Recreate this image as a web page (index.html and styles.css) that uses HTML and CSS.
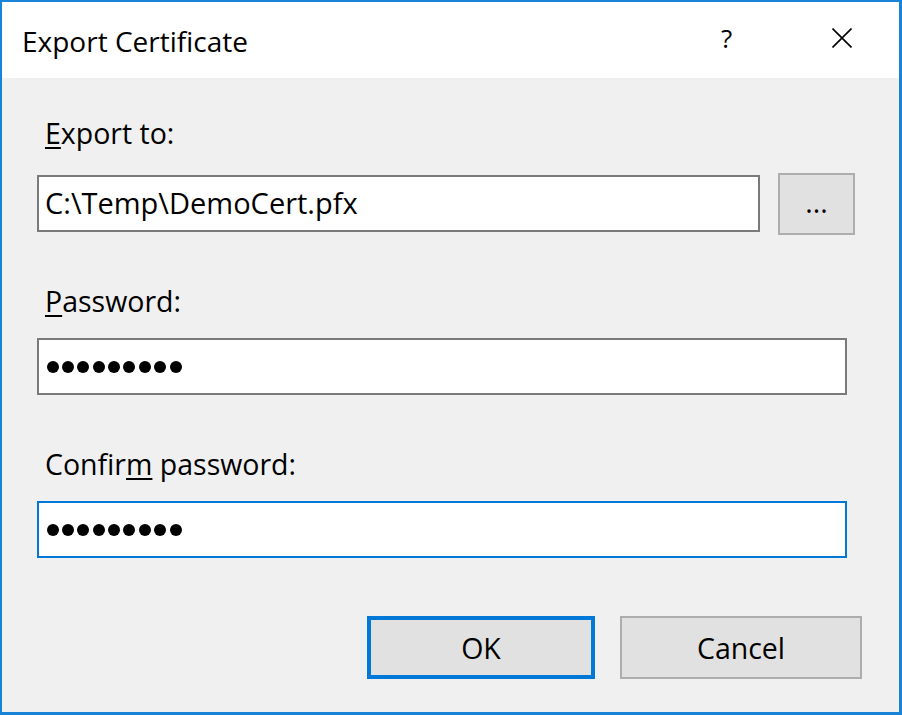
FILE: index.html
```html
<!DOCTYPE html>
<html lang="en">
<head>
<meta charset="utf-8">
<title>Export Certificate</title>
<link rel="stylesheet" href="styles.css">
</head>
<body>
<div class="window">
  <div class="titlebar">
    <div class="title">Export Certificate</div>
    <div class="tb-btn help">?</div>
    <div class="tb-btn close">
      <svg width="20" height="20" viewBox="0 0 20 20"><path d="M0.5 0.5L19.5 19.5M19.5 0.5L0.5 19.5" stroke="#000" stroke-width="1.6" fill="none"/></svg>
    </div>
  </div>
  <div class="content">
    <div class="label label-first"><u>E</u>xport to:</div>
    <div class="browse-row">
      <div class="field field-path">C:\Temp\DemoCert.pfx</div>
      <div class="btn browse">...</div>
    </div>
    <div class="label label-gap"><u>P</u>assword:</div>
    <div class="field field-wide">
      <span class="dot"></span><span class="dot"></span><span class="dot"></span><span class="dot"></span><span class="dot"></span><span class="dot"></span><span class="dot"></span><span class="dot"></span><span class="dot"></span>
    </div>
    <div class="label label-gap">Confir<u>m</u> password:</div>
    <div class="field field-wide focused">
      <span class="dot"></span><span class="dot"></span><span class="dot"></span><span class="dot"></span><span class="dot"></span><span class="dot"></span><span class="dot"></span><span class="dot"></span><span class="dot"></span>
    </div>
    <div class="buttons">
      <div class="btn ok">OK</div>
      <div class="btn cancel">Cancel</div>
    </div>
  </div>
</div>
</body>
</html>
```
FILE: styles.css
```css
* { box-sizing: border-box; }
html, body { margin: 0; padding: 0; }
body {
  width: 902px;
  height: 715px;
  overflow: hidden;
  font-family: "Open Sans", "Noto Sans", sans-serif;
  font-size: 28.5px;
  color: #000;
}
.window {
  width: 902px;
  height: 715px;
  border-style: solid;
  border-color: #1883d7;
  border-width: 2px 3px 3px 2px;
  background: #f0f0f0;
  display: flex;
  flex-direction: column;
}
.titlebar {
  height: 76px;
  background: #fff;
  display: flex;
  align-items: center;
  flex-shrink: 0;
}
.title {
  flex: 1;
  padding-left: 20px;
  font-size: 28px;
  line-height: 36px;
  margin-top: 1px;
}
.tb-btn {
  width: 115px;
  height: 76px;
  display: flex;
  align-items: center;
  justify-content: center;
}
.help {
  font-size: 26px;
  line-height: 36px;
  padding-bottom: 5px;
}
.close svg { display: block; margin-top: -4px; }
.content {
  padding-left: 35px;
}
.label {
  line-height: 36px;
  padding-left: 8px;
}
.label u {
  text-decoration-thickness: 2px;
  text-underline-offset: 3px;
}
.label-first { margin-top: 37px; }
.label-gap { margin-top: 51px; margin-bottom: 19px; }
.browse-row {
  display: flex;
  align-items: center;
  height: 57px;
  margin-top: 24px;
}
.field {
  height: 57px;
  background: #fff;
  border: 2px solid #7a7a7a;
  padding-left: 6px;
  display: flex;
  align-items: center;
  line-height: 36px;
}
.field-path { width: 723px; padding-bottom: 2px; font-size: 29px; }
.field-wide { width: 810px; gap: 3.4px; padding-left: 7.5px; }
.focused { border-color: #0078d7; }
.dot {
  width: 12px;
  height: 12px;
  border-radius: 50%;
  background: #000;
  flex-shrink: 0;
}
.btn {
  background: #e1e1e1;
  border: 2px solid #adadad;
  display: flex;
  align-items: center;
  justify-content: center;
  line-height: 36px;
}
.browse {
  width: 77px;
  height: 62px;
  margin-left: 18px;
  flex-shrink: 0;
  padding-bottom: 4px;
}
.buttons {
  display: flex;
  justify-content: flex-end;
  padding-right: 37px;
  margin-top: 58px;
  gap: 25px;
}
.ok {
  width: 228px;
  height: 63px;
  border: 4px solid #0078d7;
}
.cancel {
  width: 242px;
  height: 63px;
}
```
